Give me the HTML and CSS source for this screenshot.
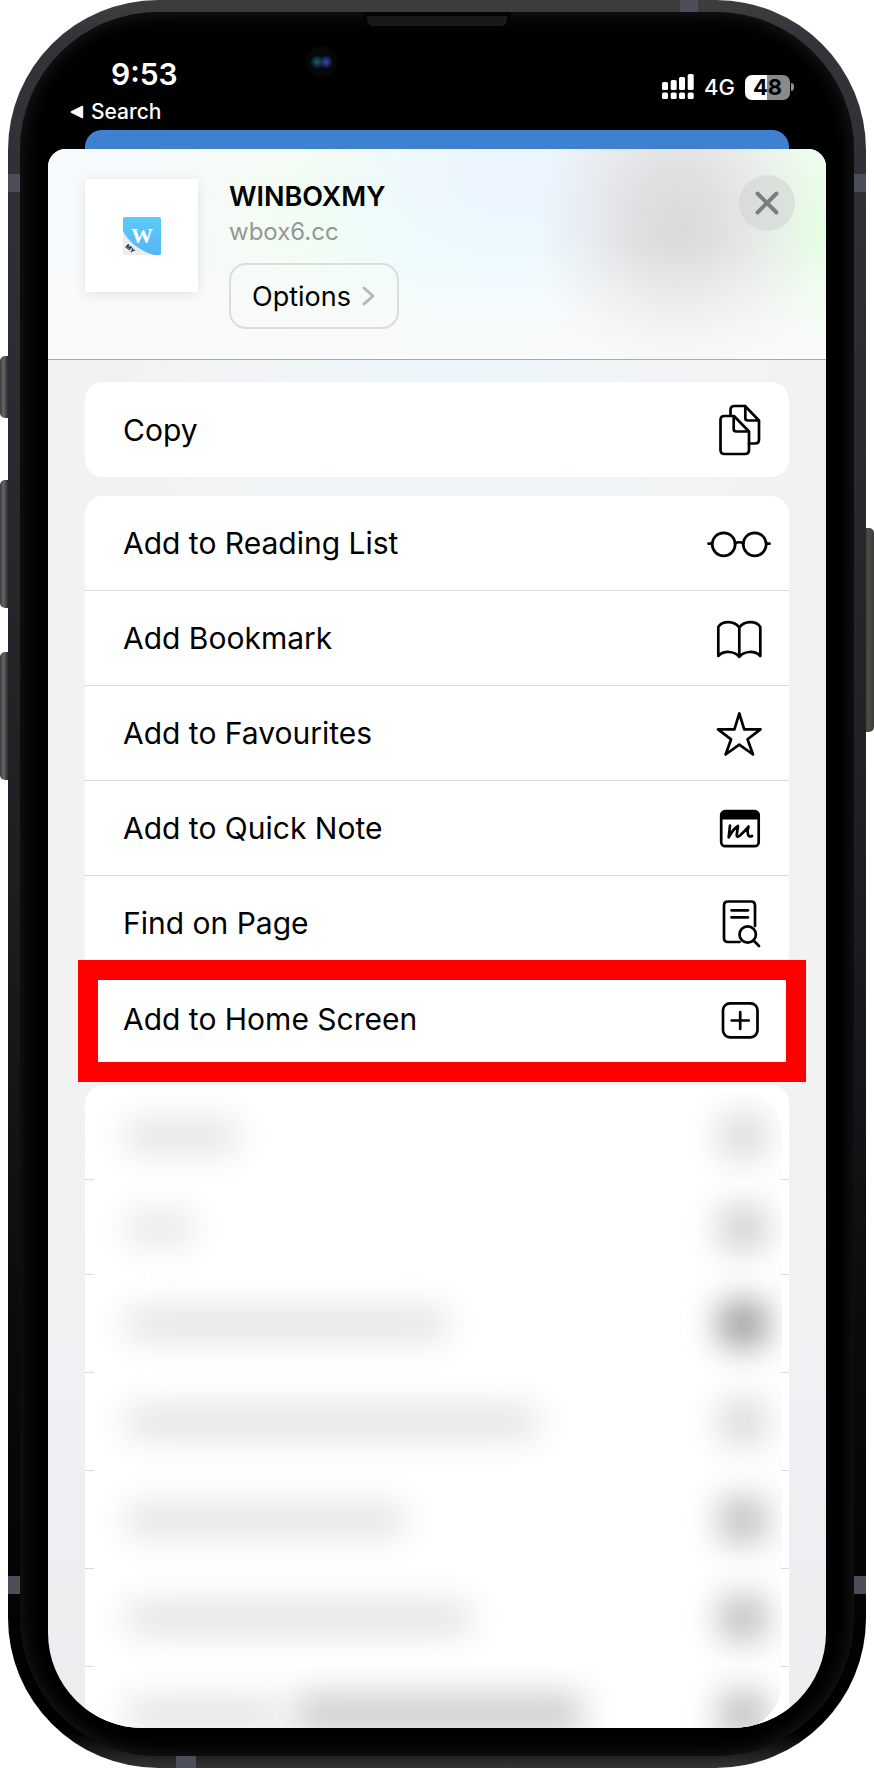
FILE: index.html
```html
<!DOCTYPE html>
<html lang="en">
<head>
<meta charset="utf-8">
<meta name="viewport" content="width=device-width, initial-scale=1">
<title>WINBOXMY</title>
<link rel="stylesheet" href="styles.css">
</head>
<body>
<div class="device">
  <span class="side-key key-mute"></span>
  <span class="side-key key-up"></span>
  <span class="side-key key-down"></span>
  <span class="side-key key-power"></span>
  <div class="frame">
    <span class="band band-lt"></span><span class="band band-rt"></span>
    <span class="band band-lb"></span><span class="band band-rb"></span>
    <span class="band band-top"></span><span class="band band-bottom"></span>
    <div class="bezel">
      <span class="speaker"></span>
      <span class="camera"></span>
      <header class="status">
        <div class="status-left">
          <time class="clock">9:53</time>
          <a class="back" href="#"><svg width="14" height="14" viewBox="0 0 14 14" aria-hidden="true"><path d="M1 6.2 12 .8q1.200-.4 1.200.8v10.800q0 1.200-1.200.8L1 7.800q-1-.8 0-1.600z" fill="#fff"/></svg>Search</a>
        </div>
        <div class="status-right">
          <svg width="32" height="26" viewBox="0 0 32 26" fill="#fff" role="img" aria-label="Signal">
            <rect x="0" y="8" width="6" height="8" rx="1.500"/><rect x="8.700" y="6" width="6" height="10" rx="1.500"/><rect x="17" y="3" width="6" height="13" rx="1.500"/><rect x="25.700" y="0" width="6" height="16" rx="1.500"/>
            <rect x="0" y="18.500" width="6" height="6.500" rx="1.500"/><rect x="8.700" y="18.500" width="6" height="6.500" rx="1.500"/><rect x="17" y="18.500" width="6" height="6.500" rx="1.500"/><rect x="25.700" y="18.500" width="6" height="6.500" rx="1.500"/>
          </svg>
          <span class="network">4G</span>
          <span class="battery">48</span><span class="battery-tip"></span>
        </div>
      </header>
      <main class="screen">
        <div class="page-behind"></div>
        <section class="sheet">
          <div class="share-head">
            <div class="thumb">
              <svg width="38" height="38" viewBox="0 0 38 38" role="img" aria-label="Winbox logo">
                <defs><linearGradient id="sky" x1="0" y1="0" x2="0" y2="1"><stop offset="0" stop-color="#5ccbf9"/><stop offset="1" stop-color="#54b6f7"/></linearGradient></defs>
                <rect width="38" height="38" rx="2" fill="#ececec"/>
                <path d="M2 0H36q2 0 2 2V36q0 2-2 2H31C16 34 4 23 0 14V2Q0 0 2 0z" fill="url(#sky)"/>
                <text x="19" y="26" text-anchor="middle" font-family="Liberation Serif, serif" font-weight="700" font-size="22" fill="#fff">W</text>
                <text x="2" y="30" transform="rotate(40 2 30)" font-family="Inter, sans-serif" font-weight="800" font-size="6" fill="#111">MY</text>
              </svg>
            </div>
            <div class="site">
              <h1 class="site-name">WINBOXMY</h1>
              <p class="site-host">wbox6.cc</p>
              <button class="options" type="button">Options
                <svg width="14" height="22" viewBox="0 0 14 22" fill="none" stroke="#b4b7b5" stroke-width="3" stroke-linecap="round" stroke-linejoin="round" aria-hidden="true"><path d="M2 3l9 8-9 8"/></svg>
              </button>
            </div>
            <button class="close" type="button" aria-label="Close">
              <svg width="26" height="26" viewBox="0 0 26 26" fill="none" stroke="#7b7f7c" stroke-width="4" stroke-linecap="round" aria-hidden="true"><path d="M3.500 3.500l19 19M22.500 3.500l-19 19"/></svg>
            </button>
          </div>
          <div class="actions">
            <ul class="card">
              <li class="row"><button class="action" type="button">Copy
                <svg class="icon" viewBox="0 0 64 56" aria-hidden="true"><path d="M23.500 13.500V8q0-4 4-4H38l14 14.500V37.500q0 4-4 4h-6M38.300 4v12q0 2.500 2.500 2.500H52"/><path d="M17.500 14H27L42 29.500V48q0 4-4 4H17.500q-4 0-4-4V18q0-4 4-4zM26.700 14v13q0 2.500 2.500 2.500H42"/></svg></button></li>
            </ul>
            <ul class="card">
              <li class="row"><button class="action" type="button">Add to Reading List
                <svg class="icon" viewBox="0 0 64 56" aria-hidden="true"><circle cx="16.700" cy="29.300" r="11.500"/><circle cx="47.700" cy="29.300" r="11.500"/><path d="M1.500 28.700H5M59.500 28.700h3M28 28.500q4.200-2.500 8.400 0"/></svg></button></li>
              <li class="row"><button class="action" type="button">Add Bookmark
                <svg class="icon" viewBox="0 0 64 56" aria-hidden="true"><path d="M32.300 17.500C27 10.500 15.500 10.500 11.300 17V46c5-5.500 16-5.500 21 .8 5-6.300 16-6.300 21-.8V17C49 10.500 37.500 10.500 32.300 17.500zM32.300 17.500V46"/></svg></button></li>
              <li class="row"><button class="action" type="button">Add to Favourites
                <svg class="icon" viewBox="0 0 64 56" aria-hidden="true"><path d="M32.300 8.500 37.200 24.400H53.500L40.500 34.300 46 49.500 32.300 39.700 18.600 49.500 24.100 34.300 11 24.400H27.400z"/></svg></button></li>
              <li class="row"><button class="action" type="button">Add to Quick Note
                <svg class="icon" viewBox="0 0 64 56" aria-hidden="true"><rect x="14.200" y="11.200" width="37.500" height="35" rx="4"/><path d="M13.500 19.500V15q0-4 4-4h31q4 0 4 4v4.500z" fill="#000" stroke="none"/><path d="M23 25.700 21.700 37.300Q26 29 31 26L29.700 35Q30 38 33 35.500 38 31 41.500 26.500 40 31 41 34.500 42 37.500 45 36"/></svg></button></li>
              <li class="row"><button class="action" type="button">Find on Page
                <svg class="icon" viewBox="0 0 64 56" aria-hidden="true"><path d="M48 31V10.500q0-4-4-4H21q-4 0-4 4V43q0 4 4 4H32.500M24.500 15.300H41M24.500 22.300H41"/><circle cx="40.700" cy="39.500" r="8.200"/><path d="M46.500 45.500l5.500 5.500"/></svg></button></li>
              <li class="row picked"><button class="action" type="button">Add to Home Screen
                <svg class="icon" viewBox="0 0 64 56" aria-hidden="true"><rect x="16" y="12.300" width="34.500" height="34" rx="7"/><path d="M33.200 21v17M24.700 29.500h17"/></svg></button></li>
            </ul>
            <ul class="card hidden-card" aria-hidden="true">
              <li class="blurred first"><div class="veil"><span class="smudge w1"></span><span class="blob"></span></div></li>
              <li class="blurred"><div class="veil"><span class="smudge w2"></span><span class="blob mid"></span></div></li>
              <li class="blurred tall"><div class="veil"><span class="smudge w3"></span><span class="blob dark"></span></div></li>
              <li class="blurred tall"><div class="veil"><span class="smudge w4"></span><span class="blob"></span></div></li>
              <li class="blurred tall"><div class="veil"><span class="smudge w5"></span><span class="blob strong"></span></div></li>
              <li class="blurred tall"><div class="veil"><span class="smudge w6"></span><span class="blob strong"></span></div></li>
              <li class="blurred last"><div class="veil"><span class="smudge w7"></span><span class="smudge deep"></span><span class="blob strong"></span></div></li>
            </ul>
          </div>
        </section>
      </main>
    </div>
  </div>
</div>
</body>
</html>
```

FILE: styles.css
```css
* { box-sizing: border-box; }
body { margin: 0; background: #fff; color: #000; font-family: Inter, "Liberation Sans", sans-serif; }
ul, h1, p { margin: 0; padding: 0; }
ul { list-style: none; }
button { font: inherit; color: inherit; cursor: pointer; }
svg { display: block; flex: none; }

/* Device body */
.device { position: relative; padding: 0 8px; }
.frame {
  position: relative;
  padding: 12px;
  border-radius: 150px;
  overflow: hidden;
  background: linear-gradient(180deg, #3c3e3d 0, #33343a 40px, #2c2d32 20%, #1d1e22 50%, #0a0b0d 75%, #000 98%, #333 100%);
}
.bezel {
  position: relative;
  padding: 0 28px 28px;
  border-radius: 138px;
  background: #000;
  box-shadow: inset 0 0 20px #1e1f21;
}
.side-key {
  position: absolute;
  width: 12px;
  left: 0;
  border-radius: 5px 0 0 5px;
  background: linear-gradient(90deg, #3c3c3c, #666 30%, #333 60%, #111);
}
.key-mute { top: 356px; height: 62px; }
.key-up { top: 480px; height: 128px; }
.key-down { top: 652px; height: 128px; }
.key-power { left: auto; right: 0; top: 528px; height: 204px; border-radius: 0 5px 5px 0; background: linear-gradient(270deg, #3c3c3a, #4c4c48 50%, #222); }
.band { position: absolute; width: 12px; height: 18px; background: #4c4e5a; }
.band-lt { left: 0; top: 174px; }
.band-rt { right: 0; top: 174px; }
.band-lb { left: 0; bottom: 174px; }
.band-rb { right: 0; bottom: 174px; }
.band-top { top: 0; right: 168px; width: 18px; height: 12px; }
.band-bottom { bottom: 0; left: 168px; width: 20px; height: 12px; }
.speaker {
  position: absolute;
  top: 0;
  left: 50%;
  width: 148px;
  height: 18px;
  margin-left: -74px;
  border: 4px solid #030303;
  border-radius: 4px 4px 10px 10px;
  background: #191919;
}
.camera {
  position: absolute;
  top: 34px;
  left: 286px;
  width: 31px;
  height: 31px;
  border-radius: 50%;
  background: radial-gradient(circle at 11px 16px, #1c5f78 0, transparent 7px), radial-gradient(circle at 20px 16px, #3a48c0 0, transparent 7px), #060709;
}

/* Status bar */
.status { display: flex; justify-content: space-between; height: 118px; padding: 41px 32px 0 22px; color: #fff; }
.clock { display: block; padding-left: 41px; font-size: 30px; line-height: 42px; font-weight: 600; }
.back { display: flex; align-items: center; gap: 7px; font-size: 21px; line-height: 34px; font-weight: 500; color: #fff; text-decoration: none; }
.status-right { display: flex; align-items: center; height: 68px; }
.network { margin: 0 10px; font-size: 22px; font-weight: 500; }
.battery {
  width: 45px;
  height: 25px;
  border-radius: 7px;
  background: linear-gradient(90deg, #fff 49%, #8a8a8a 49%);
  color: #000;
  font-size: 22px;
  line-height: 25px;
  font-weight: 700;
  text-align: center;
}
.battery-tip { width: 3px; height: 8px; margin-left: 1px; border-radius: 0 3px 3px 0; background: #8a8a8a; }

/* Share sheet */
.screen { overflow: hidden; margin: 0; border-radius: 0 0 95px 95px; }
.page-behind { height: 36px; margin: 0 37px -17px; border-radius: 17px 17px 0 0; background: #4080d0; }
.sheet {
  position: relative;
  overflow: hidden;
  border-radius: 18px 18px 0 0;
  background:
    radial-gradient(ellipse 340px 240px at 52% 240px, #edf6fb 0, #edf6fb00 100%),
    linear-gradient(180deg, #f2f2f2 60%, #eff0f3 80%, #ecedef 100%);
}
.share-head {
  display: flex;
  align-items: flex-start;
  padding: 30px 31px 30px 37px;
  border-bottom: 1px solid #a9abab;
  background:
    linear-gradient(180deg, #fafafa00 45%, #fafafacc 100%),
    radial-gradient(ellipse 140px 190px at 81% 80px, #dadadb 0, #dadadbd0 30%, #dadadb60 65%, #dadadb00 100%),
    radial-gradient(ellipse 140px 190px at 101% 80px, #e4fde2 0, #e4fde200 100%),
    radial-gradient(ellipse 220px 150px at 60% 20px, #ebf4ff 0, #ebf4ff00 100%),
    radial-gradient(ellipse 200px 160px at 57% 110px, #ecfdff 0, #ecfdff00 100%),
    radial-gradient(ellipse 200px 180px at 37% 70px, #f0fdf0 0, #f0fdf000 100%),
    radial-gradient(ellipse 200px 120px at 5% 70px, #f5fafe 0, #f5fafe00 100%),
    #fafafb;
}
.thumb {
  display: flex;
  align-items: center;
  justify-content: center;
  width: 113px;
  height: 113px;
  flex: none;
  background: #fff;
  box-shadow: 0 2px 12px #00000018;
}
.site { flex: 1; padding-left: 31px; }
.site-name { font-size: 27px; line-height: 36px; font-weight: 600; }
.site-host { padding-bottom: 14px; font-size: 24px; line-height: 34px; color: #949896; }
.options {
  display: flex;
  align-items: center;
  gap: 11px;
  height: 66px;
  padding: 0 21px;
  border: 2px solid #d9dedb;
  border-radius: 17px;
  background: transparent;
  font-size: 27px;
}
.close {
  display: flex;
  align-items: center;
  justify-content: center;
  width: 56px;
  height: 56px;
  margin-top: -4px;
  padding: 0;
  border: 0;
  border-radius: 50%;
  background: #d0d6d299;
}
.actions { display: grid; gap: 19px; padding: 22px 37px 0; }
.card { border-radius: 18px; background: #fff; }
.row { position: relative; height: 95px; border-bottom: 1px solid #dcdcdd; }
.row:last-child { border-bottom: 0; }
.action {
  display: flex;
  align-items: center;
  justify-content: space-between;
  width: 100%;
  height: 100%;
  padding: 0 18px 0 38px;
  border: 0;
  background: none;
  font-size: 30px;
  text-align: left;
}
.icon { width: 64px; height: 56px; fill: none; stroke: #000; stroke-width: 2.7px; stroke-linecap: round; stroke-linejoin: round; }
.picked::after { content: ""; position: absolute; inset: -11px -17px -16px -7px; border: 20px solid #f00; pointer-events: none; }

/* Concealed entries */
.hidden-card { border-radius: 18px 18px 0 0; }
.blurred {
  height: 95px;
  padding: 0 7px 0 9px;
  background: linear-gradient(#dcdcdc, #dcdcdc) left bottom / 9px 1px no-repeat, linear-gradient(#dcdcdc, #dcdcdc) right bottom / 8px 1px no-repeat;
}
.blurred.tall { height: 98px; }
.veil { display: flex; align-items: center; height: 100%; padding: 0 14px 0 30px; overflow-x: clip; }
.blurred.first { padding-top: 6px; }
.first .veil { overflow: clip; border-radius: 40px 40px 0 0; }
.blurred.last { height: 61px; background: none; }
.last .veil { height: 64px; padding-top: 30px; overflow: clip; border-radius: 0 0 50px 50px; }
.smudge { height: 30px; border-radius: 15px; background: #e0e0e0; filter: blur(17px); }
.w1 { width: 116px; }
.w2 { width: 72px; background: #e4e4e4; }
.w3 { width: 326px; }
.w4 { width: 416px; }
.w5 { width: 282px; }
.w6 { width: 350px; }
.w7 { width: 160px; }
.deep { width: 290px; height: 42px; margin-left: 10px; background: #cdcdcd; }
.blob { flex: none; width: 50px; height: 48px; margin-left: auto; border-radius: 12px; background: #dedede; filter: blur(16px); }
.blob.mid { background: #d4d4d4; }
.blob.strong { background: #c4c4c4; }
.blob.dark { background: #a2a2a2; }
```
